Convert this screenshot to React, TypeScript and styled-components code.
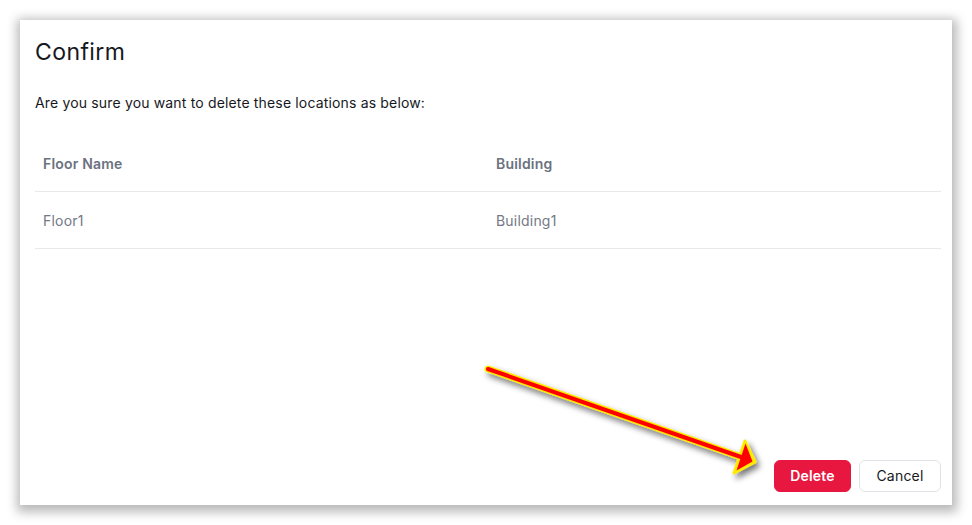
import React from "react";
import styled, { createGlobalStyle } from "styled-components";

const Global = createGlobalStyle`
  html, body { margin: 0; padding: 0; background: #ffffff; }
  body { font-family: Inter, "Liberation Sans", Arial, sans-serif; }
  #root { width: 972px; height: 525px; }
`;

const Page = styled.div`
  position: relative;
  width: 972px;
  height: 525px;
  padding: 20px 20px 20px 20px;
  box-sizing: border-box;
  background: #ffffff;
`;

const Dialog = styled.div`
  width: 932px;
  height: 485px;
  box-sizing: border-box;
  background: #ffffff;
  box-shadow: 1px 3px 10px 4px rgba(0, 0, 0, 0.28);
  padding: 14px 11px 13px 15px;
  display: flex;
  flex-direction: column;
`;

const Title = styled.h2`
  margin: 0;
  font-size: 23px;
  font-weight: 400;
  line-height: 36px;
  color: #16181d;
  letter-spacing: 0.4px;
`;

const Message = styled.p`
  margin: 23px 0 0 0;
  font-size: 14px;
  line-height: 20px;
  color: #16181d;
  letter-spacing: 0.16px;
`;

const Table = styled.div`
  margin-top: 22px;
  display: flex;
  flex-direction: column;
`;

const Row = styled.div`
  display: grid;
  grid-template-columns: 453px 1fr;
  height: 57px;
  align-items: center;
  border-bottom: 1px solid #e6e8eb;
  padding-left: 8px;
  box-sizing: border-box;
`;

const Cell = styled.div<{ $head?: boolean }>`
  font-size: 14px;
  letter-spacing: 0.2px;
  font-weight: ${(p) => (p.$head ? 600 : 400)};
  color: ${(p) => (p.$head ? "#6b7280" : "#737985")};
`;

const Footer = styled.div`
  margin-top: auto;
  display: flex;
  justify-content: flex-end;
  gap: 8px;
`;

const Button = styled.button<{ $primary?: boolean }>`
  height: 32px;
  padding: 0 14px 1px;
  border-radius: 6px;
  font-family: Inter, "Liberation Sans", Arial, sans-serif;
  font-size: 14px;
  letter-spacing: 0.2px;
  font-weight: ${(p) => (p.$primary ? 600 : 400)};
  cursor: pointer;
  border: 1px solid ${(p) => (p.$primary ? "#e8173f" : "#dfe2e6")};
  background: ${(p) => (p.$primary ? "#e8173f" : "#ffffff")};
  color: ${(p) => (p.$primary ? "#ffffff" : "#16181d")};
`;

const DeleteButton = styled(Button)`
  width: 77px;
`;

const CancelButton = styled(Button)`
  width: 82px;
`;

const ArrowLayer = styled.svg`
  position: absolute;
  left: 0;
  top: 0;
  pointer-events: none;
`;

function Arrow() {
  return (
    <ArrowLayer width={972} height={525} viewBox="0 0 972 525">
      <defs>
        <filter id="sh" x="-20%" y="-40%" width="140%" height="180%">
          <feGaussianBlur in="SourceAlpha" stdDeviation="3" />
          <feOffset dx="3" dy="4" result="b" />
          <feComponentTransfer>
            <feFuncA type="linear" slope="0.55" />
          </feComponentTransfer>
          <feMerge>
            <feMergeNode />
            <feMergeNode in="SourceGraphic" />
          </feMerge>
        </filter>
      </defs>
      <g filter="url(#sh)">
        <line x1="488" y1="369" x2="741" y2="457" stroke="#ffea00" strokeWidth="7" strokeLinecap="round" />
        <polygon points="745,441 755,462 734,473" fill="#ffea00" stroke="#ffea00" strokeWidth="3" strokeLinejoin="round" />
        <line x1="488" y1="369" x2="741" y2="457" stroke="#ff0000" strokeWidth="4" strokeLinecap="round" />
        <polygon points="745.5,443.5 752.5,461.5 736.5,470.5" fill="#ff0000" />
      </g>
    </ArrowLayer>
  );
}

export default function App() {
  return (
    <Page>
      <Global />
      <Dialog>
        <Title>Confirm</Title>
        <Message>Are you sure you want to delete these locations as below:</Message>
        <Table>
          <Row>
            <Cell $head>Floor Name</Cell>
            <Cell $head>Building</Cell>
          </Row>
          <Row>
            <Cell>Floor1</Cell>
            <Cell>Building1</Cell>
          </Row>
        </Table>
        <Footer>
          <DeleteButton $primary>Delete</DeleteButton>
          <CancelButton>Cancel</CancelButton>
        </Footer>
      </Dialog>
      <Arrow />
    </Page>
  );
}
